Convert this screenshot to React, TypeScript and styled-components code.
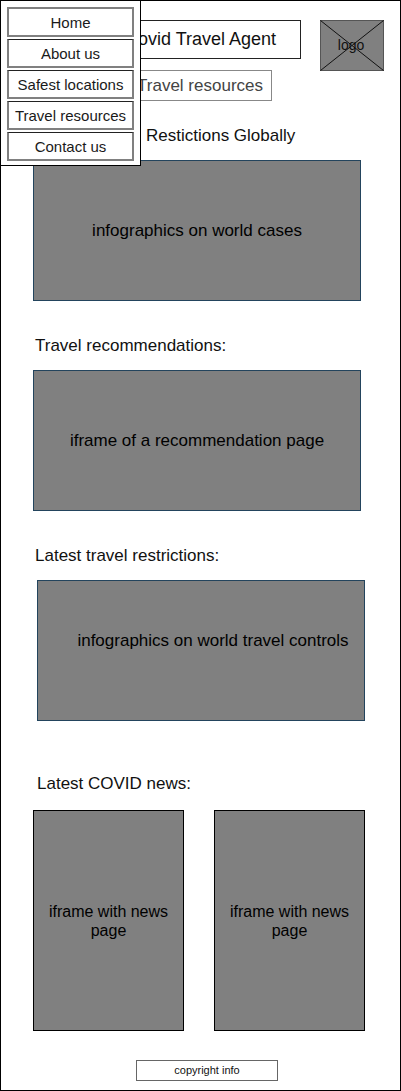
import React from "react";
import styled, { createGlobalStyle } from "styled-components";

const GlobalStyle = createGlobalStyle`
  *, *::before, *::after { box-sizing: border-box; }
  body {
    margin: 0;
    background: #fff;
    color: #111;
    font-family: "Liberation Sans", Arial, Helvetica, sans-serif;
  }
`;

const Page = styled.div`
  position: relative;
  display: flex;
  flex-direction: column;
  min-height: 100vh;
  border: 1px solid #000;
  padding: 19px 35px 9px 32px;
`;

const Menu = styled.nav`
  position: absolute;
  top: -1px;
  left: -1px;
  z-index: 1;
  border: 1px solid #000;
  background: #fff;
  padding: 6px 6px 4px;
`;

const MenuList = styled.ul`
  display: flex;
  flex-direction: column;
  gap: 2px;
  margin: 0;
  padding: 0;
  list-style: none;
`;

const MenuLink = styled.a`
  display: flex;
  align-items: center;
  justify-content: center;
  width: 127px;
  height: 29px;
  padding-top: 2px;
  border: 2px solid #808080;
  border-top: 1px solid #222;
  color: #1a1a1a;
  font-size: 15px;
  line-height: 18px;
  text-decoration: none;
  white-space: nowrap;

  li:first-child > & {
    height: 30px;
    padding-top: 1px;
    border-top: 2px solid #808080;
  }
`;

const Header = styled.header`
  display: flex;
  justify-content: flex-end;
  gap: 19px;
  margin-right: -19px;
`;

const Titles = styled.div`
  display: flex;
  flex-direction: column;
  align-items: flex-end;
  gap: 11px;
`;

const Title = styled.h1`
  display: flex;
  align-items: center;
  justify-content: center;
  width: 201px;
  height: 39px;
  margin: 0;
  padding-bottom: 2px;
  border: 1px solid #222;
  font-size: 18px;
  font-weight: 400;
  line-height: 20px;
`;

const PageLink = styled.a`
  display: flex;
  align-items: center;
  height: 31px;
  margin-right: 29px;
  padding: 0 8px;
  border: 1px solid #888;
  color: #444;
  font-size: 17px;
  line-height: 20px;
  text-decoration: none;
`;

const Logo = styled.svg`
  display: block;
  width: 64px;
  height: 52px;
`;

const Section = styled.section<{ $space?: number; $gap?: number }>`
  display: flex;
  flex-direction: column;
  gap: ${({ $gap = 13 }) => $gap}px;
  margin-top: ${({ $space = 34 }) => $space}px;
`;

const Heading = styled.h2<{ $indent?: number }>`
  margin: 0;
  padding-left: ${({ $indent = 2 }) => $indent}px;
  font-size: 17px;
  font-weight: 400;
  line-height: 22px;
`;

const Panel = styled.div<{ $end?: boolean }>`
  display: flex;
  align-items: center;
  justify-content: center;
  align-self: ${({ $end }) => ($end ? "flex-end" : "flex-start")};
  width: calc(100% - 4px);
  height: 141px;
  padding: ${({ $end }) => ($end ? "0 0 20px 24px" : "0")};
  border: 1px solid #23445d;
  background: #808080;
  color: #000;
  font-size: 17px;
  line-height: 20px;
`;

const NewsRow = styled.div`
  display: grid;
  grid-template-columns: 1fr 1fr;
  gap: 30px;
`;

const NewsPanel = styled.div`
  display: flex;
  align-items: center;
  justify-content: center;
  height: 221px;
  padding: 0 12px;
  border: 1px solid #000;
  background: #808080;
  color: #000;
  font-size: 16px;
  line-height: 19px;
  text-align: center;
`;

const Footer = styled.footer`
  display: flex;
  align-items: center;
  justify-content: center;
  align-self: center;
  width: 142px;
  height: 21px;
  margin-top: 29px;
  margin-left: 16px;
  border: 1px solid #666;
  font-size: 11px;
  line-height: 13px;
`;

const menuItems = ["Home", "About us", "Safest locations", "Travel resources", "Contact us"];

export default function App() {
  return (
    <>
      <GlobalStyle />
      <Page>
        <Menu aria-label="Main">
          <MenuList>
            {menuItems.map((item) => (
              <li key={item}>
                <MenuLink href="#">{item}</MenuLink>
              </li>
            ))}
          </MenuList>
        </Menu>

        <Header>
          <Titles>
            <Title>Covid Travel Agent</Title>
            <PageLink href="#">Travel resources</PageLink>
          </Titles>
          <Logo viewBox="0 0 64 52" role="img" aria-label="logo">
            <rect x="0.5" y="0.5" width="63" height="50" fill="#808080" stroke="#555" />
            <path d="M0.5 0.5L63.5 50.5M63.5 0.5L0.5 50.5" stroke="#111" fill="none" />
            <text x="31" y="30" textAnchor="middle" fontSize="14" fill="#111">
              logo
            </text>
          </Logo>
        </Header>

        <main>
          <Section $space={24}>
            <Heading $indent={113}>Restictions Globally</Heading>
            <Panel>infographics on world cases</Panel>
          </Section>
          <Section>
            <Heading>Travel recommendations:</Heading>
            <Panel>iframe of a recommendation page</Panel>
          </Section>
          <Section>
            <Heading>Latest travel restrictions:</Heading>
            <Panel $end>infographics on world travel controls</Panel>
          </Section>
          <Section $space={52} $gap={15}>
            <Heading $indent={4}>Latest COVID news:</Heading>
            <NewsRow>
              <NewsPanel>iframe with news page</NewsPanel>
              <NewsPanel>iframe with news page</NewsPanel>
            </NewsRow>
          </Section>
        </main>

        <Footer>copyright info</Footer>
      </Page>
    </>
  );
}
